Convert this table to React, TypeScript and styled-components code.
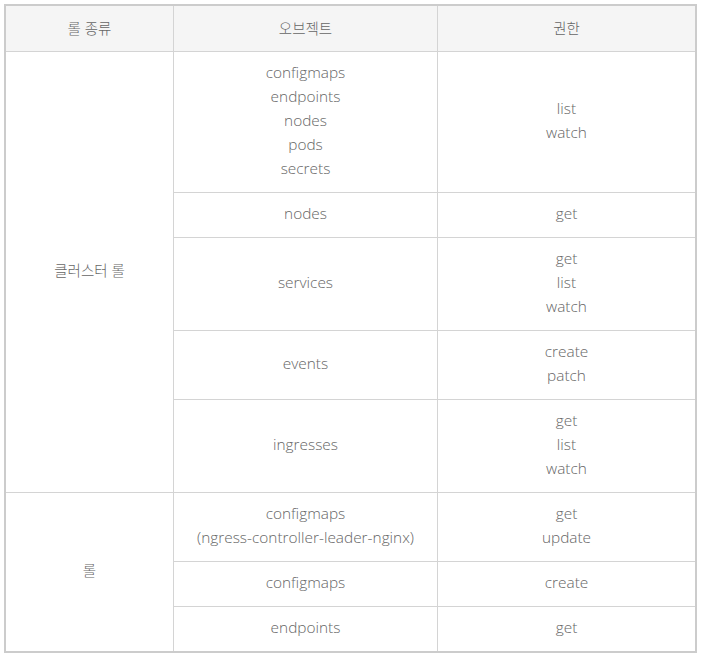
import React from 'react';
import styled, { createGlobalStyle } from 'styled-components';

const GlobalStyle = createGlobalStyle`
  html, body {
    margin: 0;
    padding: 0;
    background: #ffffff;
  }

  body {
    padding: 4px;
    font-family: 'Open Sans', 'Noto Sans CJK KR', sans-serif;
  }
`;

const Table = styled.table`
  width: 693px;
  border-collapse: separate;
  border-spacing: 0;
  border: 2px solid #cccccc;
  color: #666666;
  font-size: 15.4px;
  font-weight: 300;
  line-height: 24px;
  table-layout: fixed;
`;

const HeadCell = styled.th<{ $width: number; $last?: boolean }>`
  width: ${(p) => p.$width}px;
  height: 45px;
  padding: 0;
  background-color: #f5f5f5;
  font-size: 14.5px;
  font-weight: 300;
  text-align: center;
  vertical-align: middle;
  border-bottom: 1px solid #d4d4d4;
  border-right: ${(p) => (p.$last ? 'none' : '1px solid #d4d4d4')};
`;

const Cell = styled.td<{ $last?: boolean; $bottom?: boolean }>`
  padding: 9px 0 11px;
  text-align: center;
  vertical-align: middle;
  border-bottom: ${(p) => (p.$bottom ? 'none' : '1px solid #d4d4d4')};
  border-right: ${(p) => (p.$last ? 'none' : '1px solid #d4d4d4')};
`;

const RoleCell = styled(Cell)`
  font-size: 14.5px;
`;

const Line = styled.div`
  white-space: nowrap;
`;

interface Rule {
  objects: string[];
  verbs: string[];
}

interface Group {
  role: string;
  rules: Rule[];
}

const GROUPS: Group[] = [
  {
    role: '클러스터 롤',
    rules: [
      {
        objects: ['configmaps', 'endpoints', 'nodes', 'pods', 'secrets'],
        verbs: ['list', 'watch'],
      },
      { objects: ['nodes'], verbs: ['get'] },
      { objects: ['services'], verbs: ['get', 'list', 'watch'] },
      { objects: ['events'], verbs: ['create', 'patch'] },
      { objects: ['ingresses'], verbs: ['get', 'list', 'watch'] },
    ],
  },
  {
    role: '롤',
    rules: [
      {
        objects: ['configmaps', '(ngress-controller-leader-nginx)'],
        verbs: ['get', 'update'],
      },
      { objects: ['configmaps'], verbs: ['create'] },
      { objects: ['endpoints'], verbs: ['get'] },
    ],
  },
];

function Lines({ items }: { items: string[] }) {
  return (
    <>
      {items.map((item, i) => (
        <Line key={i}>{item}</Line>
      ))}
    </>
  );
}

function App() {
  return (
    <>
      <GlobalStyle />
      <Table>
        <thead>
          <tr>
            <HeadCell $width={167}>롤 종류</HeadCell>
            <HeadCell $width={263}>오브젝트</HeadCell>
            <HeadCell $width={257} $last>
              권한
            </HeadCell>
          </tr>
        </thead>
        <tbody>
          {GROUPS.map((group, gi) => {
            const lastGroup = gi === GROUPS.length - 1;
            return group.rules.map((rule, ri) => {
              const bottom = lastGroup && ri === group.rules.length - 1;
              return (
                <tr key={`${gi}-${ri}`}>
                  {ri === 0 && (
                    <RoleCell rowSpan={group.rules.length} $bottom={lastGroup}>
                      {group.role}
                    </RoleCell>
                  )}
                  <Cell $bottom={bottom}>
                    <Lines items={rule.objects} />
                  </Cell>
                  <Cell $bottom={bottom} $last>
                    <Lines items={rule.verbs} />
                  </Cell>
                </tr>
              );
            });
          })}
        </tbody>
      </Table>
    </>
  );
}

export default App;
